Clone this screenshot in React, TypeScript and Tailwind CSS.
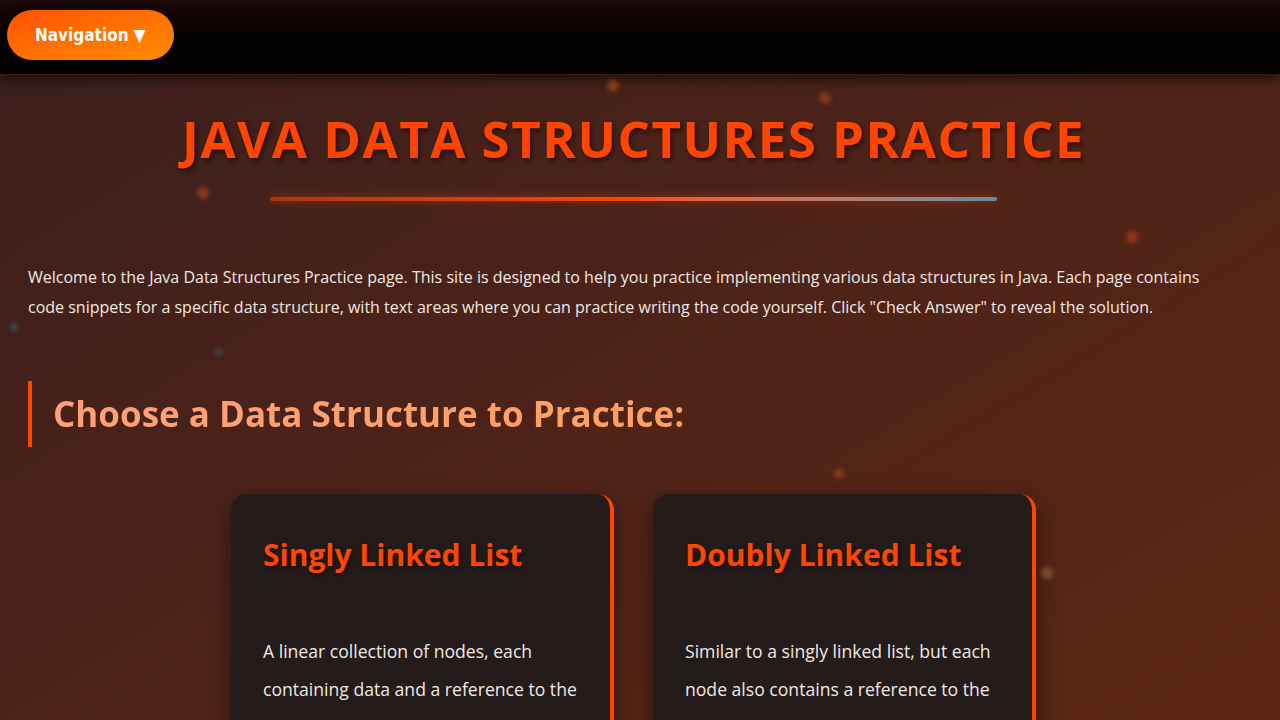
// Java data structures practice landing page
const particles = [
  { x: 613, y: 85, c: 'bg-[#ff7a1a]/40', s: 'w-3 h-3' },
  { x: 825, y: 98, c: 'bg-[#ff6a1a]/30', s: 'w-3 h-3' },
  { x: 203, y: 193, c: 'bg-[#ff5a1a]/40', s: 'w-3 h-3' },
  { x: 1132, y: 237, c: 'bg-[#ff4a1a]/40', s: 'w-3 h-3' },
  { x: 16, y: 329, c: 'bg-[#3a8aaa]/40', s: 'w-2 h-2' },
  { x: 221, y: 354, c: 'bg-[#3a8aaa]/30', s: 'w-2 h-2' },
  { x: 840, y: 475, c: 'bg-[#ff7a1a]/30', s: 'w-2.5 h-2.5' },
  { x: 1047, y: 573, c: 'bg-[#ffb080]/30', s: 'w-3 h-3' },
  { x: 237, y: 553, c: 'bg-[#3a8aaa]/50', s: 'w-2 h-2' },
];

const cards = [
  {
    title: 'Singly Linked List',
    text: 'A linear collection of nodes, each containing data and a reference to the next node in the sequence.',
  },
  {
    title: 'Doubly Linked List',
    text: 'Similar to a singly linked list, but each node also contains a reference to the previous node.',
  },
];

export default function App() {
  return (
    <div className="relative min-h-screen overflow-hidden bg-gradient-to-br from-[#3a1f1d] via-[#4f2318] to-[#5e2812] font-['Open_Sans',sans-serif] text-[#f2e8e2]">
      {particles.map((p, i) => (
        <span
          key={i}
          className={`pointer-events-none absolute rounded-full blur-[2px] ${p.c} ${p.s}`}
          style={{ left: p.x - 6, top: p.y - 6 }}
        />
      ))}

      <header className="relative z-10 h-[75px] border-b border-[#3d1a10] bg-gradient-to-b from-[#1c0a07] via-[#050202] to-[#050202] px-[7px] pt-[10px] shadow-[0_4px_12px_rgba(0,0,0,0.6)]">
        <button className="h-[50px] rounded-full bg-gradient-to-br from-[#ff5000] to-[#ff8c00] px-[28px] pt-[2px] font-['DejaVu_Sans_Condensed',sans-serif] text-[17px] font-bold text-white shadow-[0_2px_8px_rgba(0,0,0,0.5)]">
          Navigation ▼
        </button>
      </header>

      <main className="relative z-10 pr-[13px]">
        <div className="flex flex-col items-center pt-[38px]">
          <h1 className="text-[51px] font-bold leading-none tracking-[1.5px] text-[#ff4500] [text-shadow:2px_3px_4px_rgba(0,0,0,0.45)]">
            JAVA DATA STRUCTURES PRACTICE
          </h1>
          <div className="mt-[33px] h-[4px] w-[727px] rounded-full bg-gradient-to-r from-[#a8380f] via-[#ff4500] to-[#5c8fa0] shadow-[0_0_10px_rgba(255,69,0,0.5)]" />
        </div>

        <p className="mt-[61px] px-[28px] text-[16px] leading-[30px]">
          Welcome to the Java Data Structures Practice page. This site is designed to help you practice implementing various data structures in Java. Each page contains code snippets for a specific data structure, with text areas where you can practice writing the code yourself. Click "Check Answer" to reveal the solution.
        </p>

        <div className="mx-[28px] mt-[59px] border-l-4 border-[#ff4500] py-[8px] pl-[21px]">
          <h2 className="bg-gradient-to-r from-[#ff9f7a] to-[#ffa040] bg-clip-text text-[35px] font-bold leading-[50px] text-transparent">
            Choose a Data Structure to Practice:
          </h2>
        </div>

        <div className="mt-[47px] flex justify-center gap-[39px]">
          {cards.map((c) => (
            <div
              key={c.title}
              className="w-[383px] rounded-2xl border-r-4 border-[#ff4500] bg-[#241c1a] px-[32px] pb-[40px] pt-[41px] shadow-[0_8px_24px_rgba(0,0,0,0.45)]"
            >
              <h3 className="text-[30px] font-bold leading-[40px] text-[#ff4500] [text-shadow:2px_2px_4px_rgba(0,0,0,0.5)]">
                {c.title}
              </h3>
              <p className="mt-[57px] text-[17.6px] leading-[38px] text-[#f0e8e4]">{c.text}</p>
            </div>
          ))}
        </div>
      </main>
    </div>
  );
}
